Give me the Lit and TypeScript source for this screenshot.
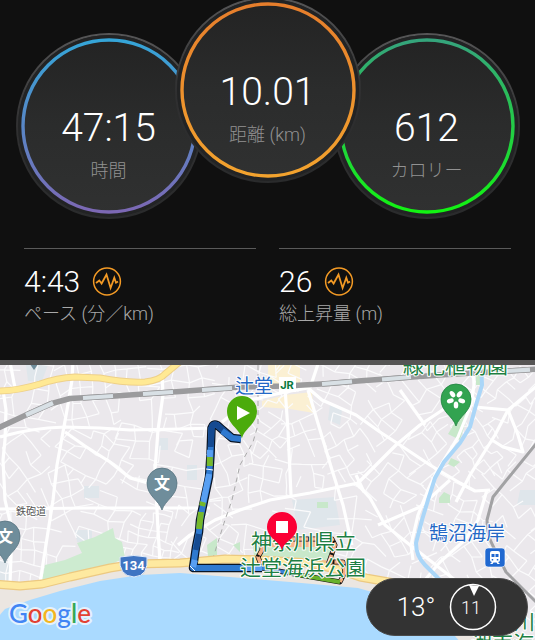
import { LitElement, html, svg, css } from "lit";
import { customElement, property } from "lit/decorators.js";

@customElement("activity-dial")
class ActivityDial extends LitElement {
  @property() value = "";
  @property() label = "";
  @property() from = "#fff";
  @property() to = "#fff";

  static styles = css`
    :host {
      display: block;
    }
    .dial {
      box-sizing: border-box;
      width: 186px;
      height: 186px;
      border-radius: 50%;
      padding: 2px;
      background: linear-gradient(#565657, #303031 50%, #2a2b2c);
      display: grid;
    }
    .face {
      border-radius: 50%;
      background: linear-gradient(#232323, #2b2c2c 50%, #303131);
      display: grid;
    }
    .face > * {
      grid-area: 1 / 1;
    }
    .rim {
      width: 182px;
      height: 182px;
    }
    .copy {
      display: flex;
      flex-direction: column;
      align-items: center;
      padding-top: 69px;
      font-family: Roboto, "Noto Sans CJK JP", sans-serif;
      font-weight: 300;
    }
    .value {
      font-size: 39px;
      line-height: 48px;
      color: #fff;
    }
    .label {
      font-size: 18px;
      line-height: 26px;
      padding-top: 6px;
      color: #929292;
    }
  `;

  render() {
    return html`<div class="dial">
      <div class="face">
        <svg class="rim" viewBox="0 0 182 182" aria-hidden="true">
          <defs>
            <linearGradient id="g" x1="0" y1="0" x2="0" y2="1">
              <stop offset="0" stop-color=${this.from} />
              <stop offset="1" stop-color=${this.to} />
            </linearGradient>
          </defs>
          <circle cx="91" cy="91" r="88.5" fill="none" stroke="#222324" stroke-width="5" />
          <circle cx="91" cy="91" r="86" fill="none" stroke="url(#g)" stroke-width="3.4" />
        </svg>
        <div class="copy">
          <span class="value">${this.value}</span>
          <span class="label">${this.label}</span>
        </div>
      </div>
    </div>`;
  }
}

@customElement("activity-stat")
class ActivityStat extends LitElement {
  @property() value = "";
  @property() label = "";

  static styles = css`
    :host {
      display: block;
      border-top: 1px solid #5a5a5a;
      padding-top: 16px;
      font-family: Roboto, "Noto Sans CJK JP", sans-serif;
      font-weight: 300;
    }
    .row {
      display: flex;
      align-items: center;
      gap: 12px;
      height: 34px;
    }
    .value {
      font-size: 30px;
      line-height: 34px;
      color: #fff;
    }
    .chart {
      padding: 0;
      border: 0;
      background: none;
      width: 30px;
      height: 30px;
    }
    .chart svg {
      display: block;
    }
    .label {
      font-size: 18px;
      line-height: 30px;
      color: #a8a8a8;
    }
  `;

  render() {
    return html`<div class="row">
        <span class="value">${this.value}</span>
        <button class="chart" aria-label="グラフ">
          <svg width="30" height="30" viewBox="0 0 30 30" fill="none" stroke="#f39a25">
            <circle cx="15" cy="14.5" r="13.4" stroke-width="1.5" />
            <path
              d="M4 16L7.3 13.5L9.6 16.500L14.5 7.500L18.6 21L22.3 10.800L24 15.700L26 14.500"
              stroke-width="1.8"
            />
          </svg>
        </button>
      </div>
      <div class="label">${this.label}</div>`;
  }
}

/* Neighbourhoods: centre, street direction in degrees, block size. */
const districts = [
  [15, 400, 12, 15], [20, 470, 55, 14], [35, 540, 8, 13], [95, 400, 80, 13],
  [95, 455, 30, 12], [60, 500, 70, 15], [110, 520, 18, 15], [150, 430, 8, 16],
  [145, 545, 15, 9], [190, 470, 5, 17], [190, 410, 85, 15], [205, 540, 35, 13],
  [235, 470, 75, 12], [230, 415, 20, 14], [265, 480, 8, 15], [265, 435, 40, 11],
  [305, 430, 70, 13], [300, 475, 5, 13], [340, 400, 25, 14], [350, 450, 60, 12],
  [330, 515, 10, 22], [385, 420, 52, 14], [390, 480, 35, 14], [400, 540, 65, 15],
  [430, 460, 48, 14], [455, 520, 20, 13], [430, 390, 50, 15], [500, 390, 42, 11],
  [480, 440, 55, 10], [515, 430, 30, 12], [520, 500, 48, 14], [470, 560, 60, 14],
  [525, 560, 42, 12], [380, 565, 28, 14], [270, 530, 4, 20],
];

const noise = (n: number) => {
  const v = Math.sin(n * 12.9898) * 43758.5453;
  return v - Math.floor(v);
};

/* Side streets: a jittered grid for each neighbourhood, with some blocks merged. */
const sideStreets = (() => {
  let d = "";
  districts.forEach(([cx, cy, deg, step], k) => {
    const a = (deg * Math.PI) / 180;
    const at = (i: number, j: number) => {
      const h = k * 977 + i * 31 + j * 131;
      const u = (i + (noise(h) - 0.5) * 0.5) * step;
      const v = (j + (noise(h + 7) - 0.5) * 0.5) * step * 0.9;
      return [cx + u * Math.cos(a) - v * Math.sin(a), cy + u * Math.sin(a) + v * Math.cos(a)];
    };
    const mine = (x: number, y: number) => {
      const own = (x - cx) ** 2 + (y - cy) ** 2;
      return districts.every(([px, py]) => (x - px) ** 2 + (y - py) ** 2 >= own);
    };
    for (let i = -7; i < 7; i++)
      for (let j = -7; j < 7; j++)
        [[1, 0], [0, 1]].forEach(([di, dj], e) => {
          const [x1, y1] = at(i, j);
          const [x2, y2] = at(i + di, j + dj);
          if (noise(k * 53 + i * 17 + j * 71 + e * 5) > 0.3 && mine((x1 + x2) / 2, (y1 + y2) / 2))
            d += `M${x1.toFixed(1)} ${y1.toFixed(1)}L${x2.toFixed(1)} ${y2.toFixed(1)}`;
        });
  });
  return d;
})();

const mainStreets = [
  "M0 437Q30 428 65 427L100 428L130 430L180 429L213 428",
  "M73 360L72 380L67 410L63 432L57 465L53 500L40 583",
  "M3 390L6 410L5 440L3 460L5 500L12 530L10 583",
  "M65 432L85 446L110 462L130 478L148 483",
  "M10 362L15 388", "M162 372L163 395L158 430L155 470L158 530L160 562",
  "M0 509L90 508L210 508", "M178 545L190 535L215 520L240 510L270 500L310 493L358 483L378 463L396 445L420 425L450 405L475 398",
  "M285 388L288 430L291 495", "M222 422L250 400L285 392L308 388L322 400L356 415L380 432L400 445L430 465L460 483L475 491L490 490",
  "M308 390L320 430L332 470L343 505L352 545", "M310 388L318 364", "M400 390L425 425",
  "M475 398L475 407L508 410L538 385", "M508 410L495 435L470 475L456 502",
  "M508 410L518 435L523 452L503 447L492 440",
  "M473 362L474 385L471 405L458 437L436 473L428 490L418 515L411 545L413 560",
  "M356 483L370 498L385 525L410 545L432 562L455 580", "M378 525L420 507L450 480",
  "M487 490L478 520L465 540L440 562L425 580", "M356 475L364 492",
];

const railway = "M-4 429L26 415L50 404L70 398.500L115 396L180 391.500L240 387L285 386L330 383.500L358 381L440 375L540 369";
const railwayLight = [
  "M26 415L53 403", "M83 398L113 396", "M143 394L173 392", "M202 390L232 388",
  "M322 384L352 381.500", "M382 379.500L411 377", "M500 371.500L530 369.700",
];

const coastRoad = "M-5 584L20 586L42 584L70 577L110 568L135 564L180 563L225 559L262 560L310 563L340 570L360 577L400 584";
const northRoad = "M-4 391Q18 391 40 384Q57 378 75 377L100 378Q125 383 145 382Q160 380 165 374L182 360";
const river = "M481 360L482 385L476 405L470 427L460 443L444 462L435 478L428 500L422 520L416 543Q416 556 425 565L445 585";
const route = "M241 439L232 438L217 425Q213 423 211.500 428L210.500 455L209 477L200 520L199 532L196 547L193 568L262 568";
const pin = "M0 0C-3 -10 -15 -14 -15 -27A15 15 0 0 1 15 -27C15 -14 3 -10 0 0Z";

@customElement("route-map")
class RouteMap extends LitElement {
  static styles = css`
    :host {
      display: block;
      overflow: hidden;
      background: #aadaff;
    }
    .canvas {
      display: block;
      width: 100%;
      font-family: "Noto Sans CJK JP", sans-serif;
    }
    .line {
      fill: none;
      stroke-linejoin: round;
    }
    .side {
      stroke: #fbfbfc;
      stroke-width: 1.2;
    }
    .main {
      stroke: #fff;
      stroke-width: 3.2;
    }
    .name {
      paint-order: stroke;
      stroke: #fff;
      stroke-width: 2px;
      stroke-linejoin: round;
    }
    .station {
      font-size: 19px;
      fill: #2468c6;
    }
    .park {
      font-size: 21px;
      fill: #1d7f43;
    }
    .street {
      font-size: 10px;
      fill: #555;
    }
    .school {
      font-size: 16px;
      font-weight: 700;
      fill: #fff;
      text-anchor: middle;
    }
    .shield {
      font: 700 13px Roboto, sans-serif;
      fill: #fff;
      text-anchor: middle;
    }
    .jr {
      font: 700 11px Inter, sans-serif;
      fill: #0b7a3e;
      text-anchor: middle;
    }
    .brand {
      font: 500 26px Lato, sans-serif;
      stroke: #e3f2fd;
      stroke-width: 4px;
    }
  `;

  private school(x: number, y: number) {
    return svg`<g transform="translate(${x} ${y})">
      <path d=${pin} fill="#6f8d9b" stroke="#587480" stroke-width="0.8" />
      <text class="school" x="0" y="-21">文</text>
    </g>`;
  }

  render() {
    return html`<svg class="canvas" viewBox="0 365 535 275" role="img" aria-label="ルート">
      <rect y="360" width="535" height="285" fill="#ebe8ec" />
      <path d="M26 365H48L42 381H28ZM160 438H168V450H158ZM84 486H99V498H84ZM75 530H92V542H77ZM187 465H197V480H187ZM292 500L335 497L340 525L298 530ZM330 405L342 410L340 425L328 420ZM0 560H10V580H0ZM520 490H535V505H517Z" fill="#dfe6eb" />
      <path d="M268 362H300V385H268ZM262 401L285 395L312 392L314 413L290 409L262 407Z" fill="#fbf0d3" />
      <path class="line side" d=${sideStreets} />
      <path d="M42 580L45 565L65 560L82 553L77 543L95 537L113 528L115 538L122 542L125 558L105 567L80 575Z" fill="#cdebd0" />
      <path d="M463 409L468 414L460 440L448 434ZM451 458L460 462L454 467L448 464ZM439 498L444 492L450 495V503H439ZM476 375H483V385H476ZM317 502H328V508H317ZM207 545L217 538V555L208 557ZM233 545L240 542V552ZM252 537L330 537L335 560L350 572L255 565Z" fill="#c8e8ca" />
      <path d="M262 540H332V547H262ZM322 560L343 562V580H330Z" fill="#f7b78e" />
      <g class="line">
        ${mainStreets.map((d) => svg`<path class="main" d=${d} />`)}
        <path d=${river} stroke="#aad6f8" stroke-width="4" />
        <path d="M258 365V425L253 442L240 465L232 500L225 520L213 558L207 578" stroke="#aaa" stroke-dasharray="5 4" />
        <path d="M540 439L505 482L493 497L487 520Q487 535 493 546L506 572L540 606" stroke="#a2a2a4" stroke-width="3" />
        <path d=${railway} stroke="#9b9b9d" stroke-width="5.500" />
        ${railwayLight.map((d) => svg`<path d=${d} stroke="#9b9b9d" stroke-width="5.500" /><path d=${d} stroke="#d8e0e5" stroke-width="4.200" />`)}
        <path d=${northRoad} stroke="#eed089" stroke-width="7" />
        <path d=${northRoad} stroke="#ffe994" stroke-width="5" />
      </g>
      <path d="M-2 586L42 586L110 570L180 565L262 562L340 572L410 585L535 640H-2Z" fill="#ebe6e1" />
      <path d="M-2 617L5 609L30 600L60 591L100 581L140 575L180 573L230 577L290 582L358 588L400 600L440 618L460 642H-2Z" fill="#aadaff" />
      <g class="line">
        <path d=${coastRoad} stroke="#ecc981" stroke-width="9" />
        <path d=${coastRoad} stroke="#fee9a0" stroke-width="6.500" />
        <path d="M262 567L258 557L262 550V539L332 539L335 545L329 562L343 562L345 572L340 582L300 575L262 568" stroke="#111" stroke-width="5" />
        <path d="M262 567L258 557L262 550V539L332 539L335 545L329 562L343 562L345 572L340 582" stroke="#f6ae82" stroke-width="3.600" stroke-dasharray="11 2" />
        <path d="M262 568L300 575" stroke="#3b83d6" stroke-width="3.600" />
        <path d="M300 575L340 582" stroke="#68b22c" stroke-width="4" />
        <path d=${route} stroke="#0a1525" stroke-width="8.500" />
        <path d=${route} stroke="#2f7ad0" stroke-width="6" />
        <g stroke-width="6">
          <path d="M230 436L217 425Q213 423 211.500 428L210.800 447M199 534L196 550" stroke="#154a91" />
          <path d="M210 450L209.700 457M209 474L203 503M193 567L195 560M242 568H262" stroke="#589ff2" />
          <path d="M209.800 457V466M203 502L202 506M201 512L199 529" stroke="#76b82a" />
          <path d="M222 431L232 438" stroke="#2f7ad0" />
        </g>
        <path d="M206 469L213 470M190 566L195 571" stroke="#fff" />
      </g>

      <text class="name street" x="16" y="515">鉄砲道</text>
      <text class="name station" x="235" y="393">辻堂</text>
      <rect x="279" y="377" width="17" height="15" fill="#fff" />
      <text class="jr" x="287" y="389">JR</text>
      <text class="name park" x="403" y="373">緑化植物園</text>
      <text class="name park" x="251" y="549">神奈川県立</text>
      <text class="name park" x="240" y="575">辻堂海浜公園</text>
      <text class="name station" x="429" y="540">鵠沼海岸</text>
      <text class="name park" x="514" y="629">川</text>
      <text class="name park" x="471" y="651">湘南海岸</text>

      <path d="M29 362H39Q37 366 34 370Q31 366 29 362Z" fill="#6f8d9b" />
      ${this.school(162, 510)} ${this.school(5, 563)}
      <path d="M120 557Q134 554 147 557Q149 576 134 577Q118 576 120 557Z" fill="#3f74c2" stroke="#e5eefb" />
      <text class="shield" x="133.500" y="570">134</text>

      <g transform="translate(456 426)">
        <path d=${pin} fill="#32a350" stroke="#228241" stroke-width="0.8" />
        <g fill="#fff">
          ${[36, 108, 180, 252, 324].map((r) => svg`<ellipse cx="0" cy="-6" rx="2.300" ry="3.500" transform="translate(0 -27) rotate(${r})" />`)}
        </g>
      </g>
      <g transform="translate(242 438)">
        <path d=${pin} fill="#4bab0b" />
        <path d="M-5 -32L8 -25L-5 -18Z" fill="#fff" />
      </g>
      <g transform="translate(282 550)">
        <path d="M0 0C-3 -10 -15 -12 -15 -23A15 15 0 0 1 15 -23C15 -12 3 -10 0 0Z" fill="#fb0035" />
        <rect x="-6" y="-29" width="12" height="12" fill="#fff" />
      </g>
      <g transform="translate(485 548)">
        <rect width="20" height="19" rx="3" fill="#2068d0" stroke="#fff" stroke-width="0.600" />
        <path d="M7 3H13Q15 3 15 5V12Q15 14 13 14L15 16H12.500L11.500 14.500H8.500L7.500 16H5L7 14Q5 14 5 12V5Q5 3 7 3Z" fill="#fff" />
        <path d="M6.500 6H9.500V9H6.500ZM10.500 6H13.500V9H10.500ZM6.700 11H8.200V12.500H6.700ZM11.800 11H13.300V12.500H11.800Z" fill="#2068d0" />
      </g>
      <text class="name brand" x="9" y="623"><tspan fill="#4285f4">G</tspan><tspan fill="#e34133">o</tspan><tspan fill="#f4b51e">o</tspan><tspan fill="#4285f4">g</tspan><tspan fill="#34a853">l</tspan><tspan fill="#e34133">e</tspan></text>
    </svg>`;
  }
}

@customElement("app-root")
class AppRoot extends LitElement {
  static styles = css`
    :host {
      display: block;
      min-height: 100vh;
      background: #101010;
      overflow: hidden;
    }
    .dials {
      display: flex;
      justify-content: center;
      align-items: flex-end;
      height: 219px;
    }
    .middle {
      margin: 0 -27px 36px;
      z-index: 1;
    }
    .stats {
      display: grid;
      grid-template-columns: 1fr 1fr;
      gap: 23px;
      padding: 29px 24px 31px;
    }
    .map {
      position: relative;
      border-top: 5px solid #565555;
    }
    .weather {
      position: absolute;
      right: 7px;
      bottom: 4px;
      box-sizing: border-box;
      width: 162px;
      height: 58px;
      border: 1px solid #4a4a4a;
      border-radius: 29px;
      background: #333;
      display: flex;
      align-items: center;
      justify-content: center;
      gap: 14px;
      color: #fff;
      font: 300 26px Roboto, sans-serif;
    }
    .wind {
      display: block;
      font: 300 18px Roboto, sans-serif;
      fill: #fff;
      text-anchor: middle;
    }
  `;

  render() {
    return html`<main>
      <section class="dials">
        <activity-dial value="47:15" label="時間" from="#35a5d8" to="#7c68b4"></activity-dial>
        <activity-dial class="middle" value="10.01" label="距離 (km)" from="#e67e2c" to="#f3a32e"></activity-dial>
        <activity-dial value="612" label="カロリー" from="#35a47c" to="#12f312"></activity-dial>
      </section>
      <section class="stats">
        <activity-stat value="4:43" label="ペース (分／km)"></activity-stat>
        <activity-stat value="26" label="総上昇量 (m)"></activity-stat>
      </section>
      <section class="map">
        <route-map></route-map>
        <div class="weather">
          <span>13°</span>
          <svg class="wind" width="48" height="48" viewBox="0 0 48 48">
            <circle cx="24" cy="24" r="22.500" fill="none" stroke="#fff" stroke-width="1.500" />
            <path d="M20 2L30 3L25 13Z" />
            <text x="22" y="31">11</text>
          </svg>
        </div>
      </section>
    </main>`;
  }
}
